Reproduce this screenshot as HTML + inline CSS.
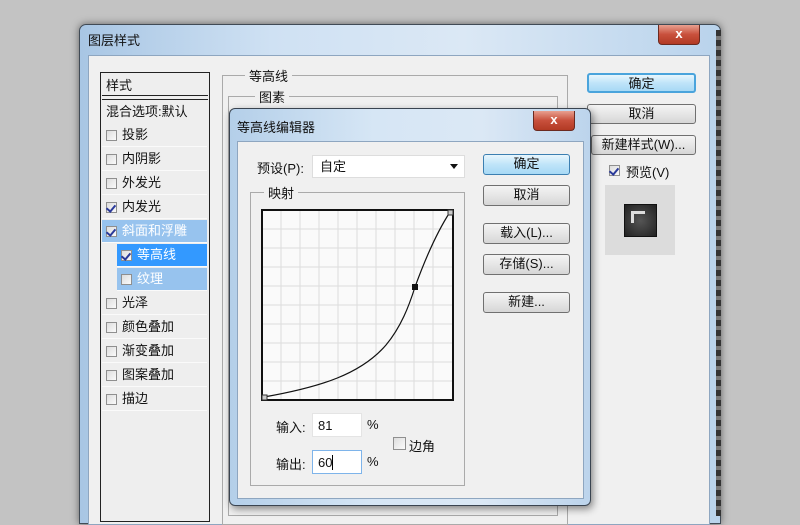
<!DOCTYPE html>
<html><head><meta charset="utf-8"><style>
*{margin:0;padding:0;box-sizing:border-box}
body{width:800px;height:516px;overflow:hidden;background:#c3c3c3;font-family:"Liberation Sans","Noto Sans CJK SC",sans-serif;font-size:13px;color:#111;position:relative}
.a{position:absolute}
.btn{position:absolute;border:1px solid #707070;border-radius:3px;background:linear-gradient(#f4f4f4,#e6e6e6 50%,#d6d6d6);text-align:center;font-size:13px;line-height:17px}
.btn.def{border-color:#3c7fb1;background:linear-gradient(#e8f6fd,#bfe4f9 50%,#a7d9f5)}
.cb{position:absolute;width:11px;height:11px;border:1px solid #8f8f8f;background:linear-gradient(135deg,#ddd,#fafafa)}
.cb.on::after{content:"";position:absolute;left:1px;top:0px;width:4px;height:7px;border:solid #2a3a9a;border-width:0 2px 2px 0;transform:rotate(40deg)}
.row{position:absolute;left:102px;width:105px;height:23px;border-bottom:1px solid #fafafa;line-height:22px;padding-left:20px;font-size:13px}
.row .cb{left:4px;top:6px}
.close{position:absolute;width:42px;height:20px;border:1px solid #6b2a20;border-top:none;border-radius:0 0 4px 4px;background:linear-gradient(#e8a090,#c8503c 50%,#b23a24);color:#fff;text-align:center;font-weight:bold;font-size:13px;line-height:18px}
</style></head><body>
<div class="a" style="left:79px;top:24px;width:642px;height:500px;border-radius:7px 7px 0 0;background:linear-gradient(90deg,#a8c6e4,#cfe1f3 30%,#dbe8f5 60%,#b9d3ec);border:1px solid #404a55;box-shadow:0 0 8px rgba(0,0,0,.5)"></div>
<div class="a" style="left:716px;top:30px;width:5px;height:486px;background:repeating-linear-gradient(#333 0 6px,#777 6px 10px)"></div>
<div class="a" style="left:88px;top:30px;font-size:13px">图层样式</div>
<div class="close" style="left:658px;top:25px">x</div>
<div class="a" style="left:88px;top:55px;width:622px;height:470px;background:#f0f0f0;border:1px solid #8ea6c0"></div>
<div class="a" style="left:100px;top:72px;width:110px;height:450px;border:1px solid #222;background:#eeeeee"></div>
<div class="a" style="left:102px;top:74px;width:106px;height:22px;border-bottom:1px solid #222;line-height:24px;padding-left:4px">样式</div>
<div class="a" style="left:102px;top:99px;width:106px;height:24px;border-top:1px solid #222;line-height:24px;padding-left:4px">混合选项:默认</div>
<div class="row" style="top:124px"><span class="cb"></span>投影</div>
<div class="row" style="top:148px"><span class="cb"></span>内阴影</div>
<div class="row" style="top:172px"><span class="cb"></span>外发光</div>
<div class="row" style="top:196px"><span class="cb on"></span>内发光</div>
<div class="row" style="top:220px;background:#97c3ee;color:#fff"><span class="cb on"></span>斜面和浮雕</div>
<div class="row" style="top:244px;left:117px;width:90px;background:#3399ff;color:#fff"><span class="cb on"></span>等高线</div>
<div class="row" style="top:268px;left:117px;width:90px;background:#97c3ee;color:#fff"><span class="cb"></span>纹理</div>
<div class="row" style="top:292px"><span class="cb"></span>光泽</div>
<div class="row" style="top:316px"><span class="cb"></span>颜色叠加</div>
<div class="row" style="top:340px"><span class="cb"></span>渐变叠加</div>
<div class="row" style="top:364px"><span class="cb"></span>图案叠加</div>
<div class="row" style="top:388px"><span class="cb"></span>描边</div>
<div class="a" style="left:222px;top:75px;width:346px;height:450px;border:1px solid #aaa"></div>
<div class="a" style="left:245px;top:66px;background:#f0f0f0;padding:0 4px">等高线</div>
<div class="a" style="left:228px;top:96px;width:330px;height:420px;border:1px solid #aaa"></div>
<div class="a" style="left:255px;top:87px;background:#f0f0f0;padding:0 4px">图素</div>
<div class="btn def" style="left:587px;top:73px;width:109px;height:20px;border-width:2px;border-color:#4aa4dc">确定</div>
<div class="btn" style="left:587px;top:104px;width:109px;height:20px">取消</div>
<div class="btn" style="left:591px;top:135px;width:105px;height:20px">新建样式(W)...</div>
<span class="cb on" style="left:609px;top:165px"></span>
<div class="a" style="left:626px;top:162px">预览(V)</div>
<div class="a" style="left:605px;top:185px;width:70px;height:70px;background:#dcdcdc"></div>
<div class="a" style="left:624px;top:204px;width:33px;height:33px;background:radial-gradient(#555,#222);border:1px solid #111"></div>
<div class="a" style="left:631px;top:211px;width:14px;height:12px;border-left:3px solid #ddd;border-top:3px solid #ddd"></div>
<div class="a" style="left:229px;top:108px;width:362px;height:398px;border-radius:6px;background:linear-gradient(90deg,#b4cfe9,#d6e6f5 40%,#dbe8f5 70%,#bcd4ec);border:1px solid #3a4450;box-shadow:2px 3px 8px rgba(0,0,0,.45)"></div>
<div class="a" style="left:237px;top:117px">等高线编辑器</div>
<div class="close" style="left:533px;top:111px">x</div>
<div class="a" style="left:237px;top:141px;width:347px;height:358px;background:#f0f0f0;border:1px solid #8ea6c0"></div>
<div class="a" style="left:257px;top:158px">预设(P):</div>
<div class="a" style="left:312px;top:155px;width:153px;height:23px;background:#fff;border:1px solid #ddd;line-height:22px;padding-left:7px">自定<span style="position:absolute;right:6px;top:8px;border:4px solid transparent;border-top:5px solid #111;border-bottom:0"></span></div>
<div class="btn def" style="left:483px;top:154px;width:87px;height:21px">确定</div>
<div class="btn" style="left:483px;top:185px;width:87px;height:21px">取消</div>
<div class="btn" style="left:483px;top:223px;width:87px;height:21px">载入(L)...</div>
<div class="btn" style="left:483px;top:254px;width:87px;height:21px">存储(S)...</div>
<div class="btn" style="left:483px;top:292px;width:87px;height:21px">新建...</div>
<div class="a" style="left:250px;top:192px;width:215px;height:294px;border:1px solid #aaa"></div>
<div class="a" style="left:264px;top:183px;background:#f0f0f0;padding:0 4px">映射</div>
<svg class="a" style="left:261px;top:209px" width="193" height="192" viewBox="0 0 193 192">
<rect x="1" y="1" width="191" height="190" fill="#fafafa" stroke="#111" stroke-width="2"/>
<g stroke="#dcdcdc" stroke-width="1">
<path d="M20 2V190M39 2V190M58 2V190M77 2V190M96 2V190M115 2V190M134 2V190M153 2V190M172 2V190M2 20H191M2 39H191M2 58H191M2 77H191M2 96H191M2 115H191M2 134H191M2 153H191M2 172H191"/>
</g>
<path d="M3 188C60 178 100 165 125 136 140 118 148 97 154 78 166 45 178 20 189 3" fill="none" stroke="#111" stroke-width="1.2"/>
<rect x="151" y="75" width="6" height="6" fill="#111"/>
<rect x="1" y="186" width="5" height="5" fill="#ccc" stroke="#333"/>
<rect x="187" y="1" width="5" height="5" fill="#ccc" stroke="#333"/>
</svg>
<div class="a" style="left:276px;top:417px">输入:</div>
<div class="a" style="left:312px;top:413px;width:50px;height:24px;background:#fff;border:1px solid #e4e4e4;line-height:23px;padding-left:5px">81</div>
<div class="a" style="left:367px;top:417px">%</div>
<span class="cb" style="left:393px;top:437px;width:13px;height:13px"></span>
<div class="a" style="left:409px;top:436px">边角</div>
<div class="a" style="left:276px;top:454px">输出:</div>
<div class="a" style="left:312px;top:450px;width:50px;height:24px;background:#fff;border:1px solid #7eb4ea;line-height:23px;padding-left:5px">60<span style="display:inline-block;width:1px;height:15px;background:#000;vertical-align:-3px"></span></div>
<div class="a" style="left:367px;top:454px">%</div>
</body></html>
